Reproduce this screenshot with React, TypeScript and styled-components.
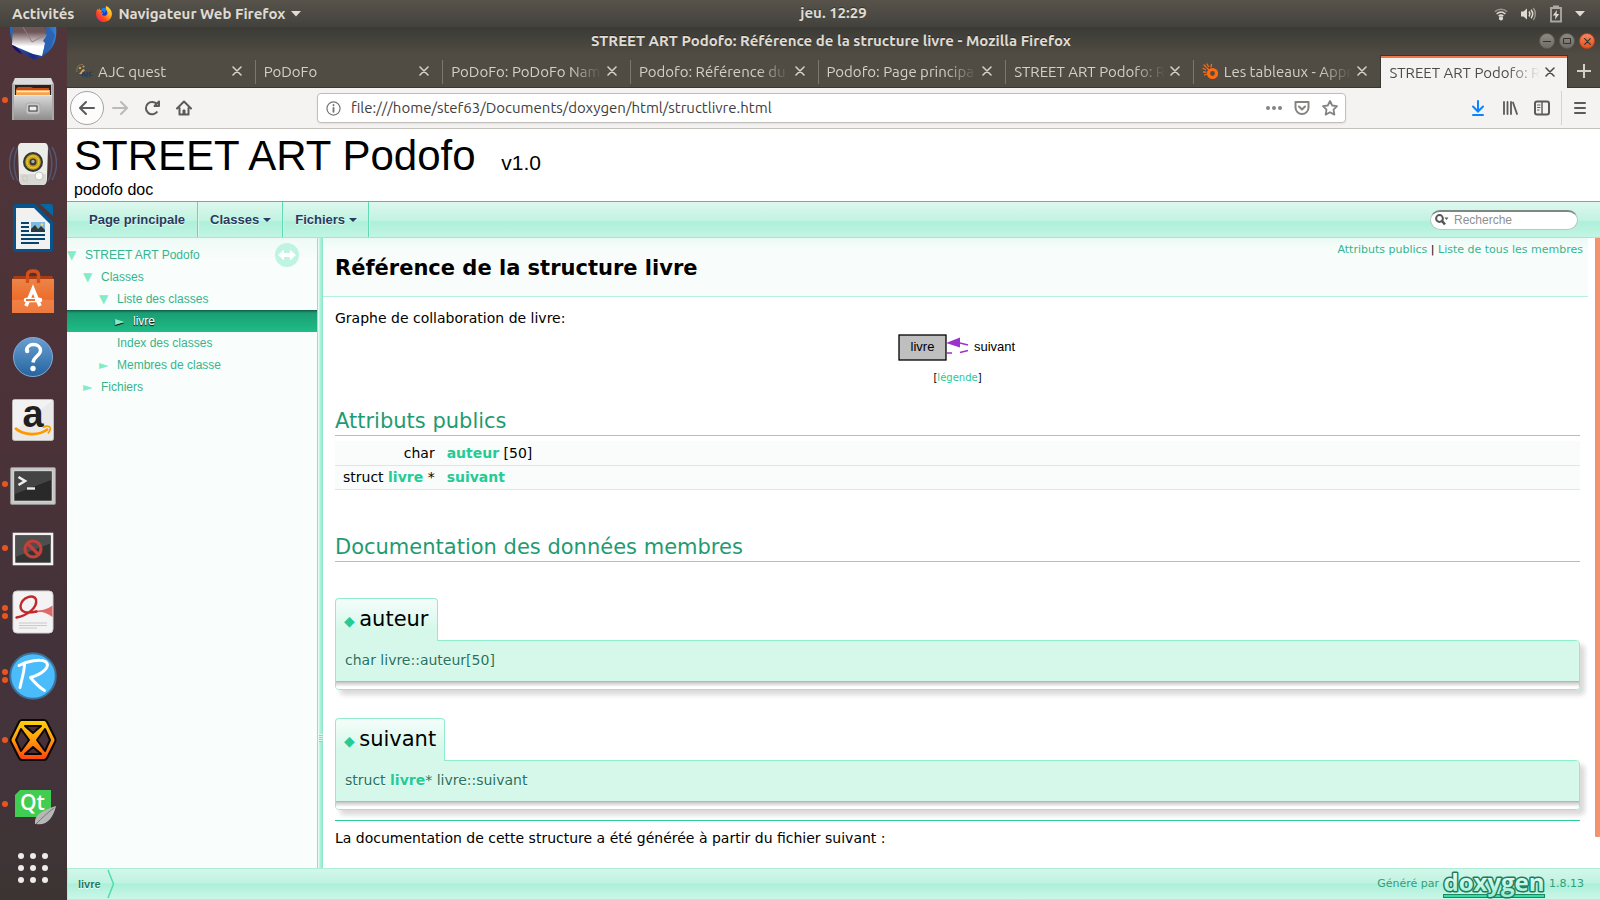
import React from "react";
import styled, { createGlobalStyle, css } from "styled-components";

const ui = `Ubuntu, "Noto Sans", "Open Sans", sans-serif`;
const sans = `"Liberation Sans", Arial, sans-serif`;
const doc = `"DejaVu Sans", Roboto, sans-serif`;

const Global = createGlobalStyle`
  *, *::before, *::after { box-sizing: border-box; }
  body { margin: 0; background: #fff; }
  button, input { font: inherit; color: inherit; }
  button { border: 0; padding: 0; background: none; cursor: pointer; }
  h1, h2, h3, p, ul { margin: 0; padding: 0; font-weight: normal; }
  ul { list-style: none; }
  a { text-decoration: none; color: inherit; }
  svg { display: block; flex: none; }
`;

const Desktop = styled.div`
  display: grid;
  grid-template: 27px minmax(0, 1fr) / 67px minmax(0, 1fr);
  height: 100vh;
  overflow: hidden;
`;

/* ---------- top panel ---------- */
const TopBar = styled.header`
  grid-column: 1 / -1;
  display: grid;
  grid-template-columns: 67px minmax(0, 1fr);
  background: linear-gradient(#57534b, #43423d);
  color: #dfdbd2;
  font: bold 15px/26px ${ui};
  text-shadow: 0 -1px 0 #33322e;
`;
const TopLeft = styled.div`
  grid-area: 1 / 1 / 2 / 3;
  display: flex;
  align-items: center;
  padding-left: 12px;
  gap: 22px;
`;
const AppMenu = styled.button`
  display: flex;
  align-items: center;
  gap: 6px;
`;
const Clock = styled.time`
  grid-area: 1 / 2 / 2 / 3;
  justify-self: center;
`;
const Tray = styled.div`
  grid-area: 1 / 2 / 2 / 3;
  justify-self: end;
  display: flex;
  align-items: center;
  gap: 12px;
  padding-right: 15px;
`;

/* ---------- dock ---------- */
const Dock = styled.nav`
  display: flex;
  flex-direction: column;
  justify-content: flex-end;
  overflow: hidden;
  background: linear-gradient(#50363a, #4b3238 45%, #44323a 70%, #42343a 88%, #3c3433);
`;
const DockItem = styled.button`
  flex: none;
  display: grid;
  grid-template-columns: 9px 48px;
  align-items: center;
  height: 64px;
`;
const Dots = styled.span`
  display: grid;
  gap: 2px;
  padding-left: 2px;
`;
const Dot = styled.i`
  width: 6px;
  height: 6px;
  border-radius: 50%;
  background: #e95420;
`;

/* ---------- browser window ---------- */
const Window = styled.div`
  display: flex;
  flex-direction: column;
  min-height: 0;
`;
const TitleBar = styled.div`
  flex: none;
  display: grid;
  grid-template-columns: 1fr auto 1fr;
  align-items: center;
  height: 28px;
  padding-right: 5px;
  background: linear-gradient(#3b3a36, #504c44);
  color: #dfdbd2;
  font: bold 15px/26px ${ui};
  text-shadow: 0 -1px 0 #2b2a27;
`;
const WindowTitle = styled.span`
  grid-column: 2;
`;
const WinButtons = styled.div`
  justify-self: end;
  display: flex;
  gap: 4px;
`;
const WinButton = styled.button<{ $close?: boolean }>`
  width: 16px;
  height: 16px;
  border-radius: 50%;
  border: 1px solid ${(p) => (p.$close ? "#c1441a" : "#5d5a53")};
  background: ${(p) => (p.$close ? "linear-gradient(#f48860, #e2541d)" : "linear-gradient(#8d8a82, #706d66)")};
  color: #33322e;
  display: grid;
  place-items: center;
`;
const TabBar = styled.div`
  flex: none;
  display: flex;
  height: 33px;
  background: #504c44;
  border-bottom: 1px solid #383632;
  font: 15px/32px ${ui};
`;
const Tab = styled.div<{ $active?: boolean }>`
  flex: 1 1 0;
  min-width: 0;
  display: flex;
  align-items: center;
  padding: 0 8px 0 9px;
  color: #d5d0c6;
  position: relative;
  &:not(:first-child)::before {
    content: "";
    position: absolute;
    left: 0;
    top: 5px;
    height: 24px;
    width: 1px;
    background: #7b776f;
  }
  ${(p) =>
    p.$active &&
    css`
      background: #f4f3f2;
      color: #4c4c4c;
      border: solid #383632;
      border-width: 1px 1px 0;
      margin-bottom: -1px;
      padding: 0 7px 0 8px;
      box-shadow: inset 0 2px #f0764a;
      &&::before { display: none; }
    `}
`;
const TabTitle = styled.button`
  flex: 1;
  min-width: 0;
  height: 30px;
  text-align: left;
  white-space: nowrap;
  overflow: hidden;
  mask-image: linear-gradient(to left, transparent, #000 32px);
`;
const TabIcon = styled.span`
  width: 22px;
`;
const TabClose = styled.button`
  display: grid;
  place-items: center;
  width: 20px;
  height: 20px;
`;
const NewTab = styled.button`
  width: 32px;
  display: grid;
  place-items: center;
  color: #d5d0c6;
`;
const ToolBar = styled.div`
  flex: none;
  display: flex;
  align-items: center;
  height: 41px;
  padding: 0 2px 0 3px;
  background: #f4f3f2;
  border-bottom: 1px solid #c4c1bd;
  color: #5b5a58;
`;
const ToolButton = styled.button<{ $dim?: boolean }>`
  flex: none;
  width: 32px;
  height: 34px;
  display: grid;
  place-items: center;
  color: ${(p) => (p.$dim ? "#bcbab8" : "inherit")};
`;
const BackButton = styled(ToolButton)`
  width: 34px;
  border: 1px solid #a5a3a0;
  border-radius: 50%;
  background: #fcfcfc;
`;
const UrlBox = styled.div`
  flex: 1;
  display: flex;
  align-items: center;
  height: 30px;
  margin: 0 116px 0 117px;
  padding: 0 1px 0 8px;
  border: 1px solid #c2bfbb;
  border-radius: 4px;
  background: #fff;
  color: #77757a;
  box-shadow: 0 1px 2px rgba(0, 0, 0, 0.08);
`;
const UrlInput = styled.input`
  flex: 1;
  min-width: 0;
  border: 0;
  outline: 0;
  padding: 0 0 0 10px;
  background: none;
  color: #3e3e3e;
  font: 15px/26px ${ui};
`;
const UrlButton = styled(ToolButton)`
  width: 28px;
  height: 26px;
  color: #858381;
`;
const Menu = styled(ToolButton)`
  width: 37px;
  margin-left: 3px;
  border-left: 1px solid #d6d4d1;
`;

/* ---------- documentation page ---------- */
const Masthead = styled.div`
  flex: none;
  height: 72px;
  padding: 3px 7px 0;
  background: #fff;
  color: #000;
  font-family: ${sans};
`;
const ProjectName = styled.h1`
  font-size: 42px;
  line-height: 48px;
`;
const Version = styled.small`
  margin-left: 14px;
  font-size: 21px;
  line-height: 21px;
`;
const Brief = styled.p`
  font-size: 16px;
  line-height: 20px;
`;
const NavBar = styled.nav`
  flex: none;
  display: flex;
  align-items: center;
  height: 37px;
  padding: 0 22px 0 9px;
  border-top: 1px solid #35cc9b;
  border-bottom: 1px solid #98eccf;
  background: linear-gradient(#ddf8ee, #c0f3e1 54%, #adf0d9 56%, #c3f4e4);
  font: bold 13px/36px ${sans};
  color: #283a5d;
  text-shadow: 0 1px 1px rgba(255, 255, 255, 0.9);
`;
const NavLink = styled.a`
  display: flex;
  align-items: center;
  gap: 4px;
  height: 35px;
  padding: 0 11px 0 12px;
  border-right: 1px solid #5fdbb2;
  box-shadow: 1px 0 #d8f8ec;
  &:first-child { padding: 0 12px 0 13px; }
`;
const Caret = styled.i`
  border: 4px solid transparent;
  border-top-color: #283a5d;
  border-bottom: 0;
`;
const SearchBox = styled.label`
  display: flex;
  align-items: center;
  gap: 5px;
  width: 148px;
  height: 20px;
  margin: 0 0 0 auto;
  padding: 0 10px 0 4px;
  border: 1px solid #b9c7c1;
  border-top: 2px solid #7f8784;
  border-radius: 10px;
  background: #fff;
`;
const SearchInput = styled.input`
  width: 100%;
  min-width: 0;
  border: 0;
  outline: 0;
  padding: 0;
  background: none;
  font: 12px/16px ${sans};
  &::placeholder { color: #909090; opacity: 1; }
`;
const Split = styled.div`
  flex: 1;
  min-height: 0;
  display: flex;
`;
const Side = styled.aside`
  flex: none;
  display: flex;
  align-items: flex-start;
  width: 251px;
  padding-top: 6px;
  border-right: 1px solid #86e8c7;
  background: linear-gradient(#eefaf6, #f9fdfc 22px);
  position: relative;
  font: 12px/22px ${sans};
  color: #35b58c;
`;
const Tree = styled.ul`
  flex: 1;
`;
const TreeRow = styled.li<{ $level: number; $selected?: boolean }>`
  display: flex;
  height: 22px;
  padding-left: ${(p) => p.$level * 16}px;
  ${(p) =>
    p.$selected &&
    css`
      color: #fff;
      background: linear-gradient(#0e5c43, #1a9e73 3px, #1fbd88);
      text-shadow: 0 1px 1px #000;
    `}
`;
const Arrow = styled.span`
  width: 18px;
  color: #82ebc8;
  font-family: ${doc};
`;
const Sync = styled.button`
  position: absolute;
  top: 5px;
  right: 18px;
`;
const Splitter = styled.div`
  flex: none;
  width: 5px;
  display: grid;
  grid-template-rows: 4fr 1fr;
  background: linear-gradient(to right, #f4fdfa, #b6f1de 40%, #86e8c6);
`;
const Grip = styled.i`
  place-self: end center;
  width: 4px;
  height: 8px;
  background: repeating-linear-gradient(#d9f8ed 0 1px, #79dfbc 1px 2px);
`;
const Main = styled.main`
  flex: 1;
  min-width: 0;
  overflow: hidden;
  background: #fff;
  color: #000;
  font: 14px/18px ${doc};
`;
const ScrollTrack = styled.div`
  flex: none;
  width: 12px;
  padding-left: 7px;
  background: #fff;
`;
const ScrollThumb = styled.div`
  height: 95%;
  background: #f4926c;
  border-radius: 0 0 1px 1px;
`;
const PageHead = styled.div`
  display: flex;
  justify-content: space-between;
  height: 59px;
  padding: 5px 5px 0 12px;
  border-bottom: 1px solid #b4f1dd;
  background: linear-gradient(#e9faf4, #f8fdfb 12px);
`;
const PageTitle = styled.h2`
  margin-top: 13px;
  font-size: 21px;
  line-height: 25px;
  font-weight: bold;
`;
const Summary = styled.div`
  font-size: 11px;
  line-height: 14px;
`;
const Link = styled.a`
  color: #35b58c;
`;
const LegendLink = styled.a`
  color: #25cb94;
`;
const Strong = styled(LegendLink)`
  font-weight: bold;
`;
const Contents = styled.div`
  padding: 12px 8px 0 12px;
`;
const Graph = styled.figure`
  display: flex;
  flex-direction: column;
  align-items: center;
  gap: 6px;
  margin: 4px 0 24px;
`;
const Legend = styled.figcaption`
  font-size: 10px;
  line-height: 14px;
`;
const SectionTitle = styled.h2`
  padding-bottom: 1px;
  border-bottom: 1px solid #6be3bc;
  color: #1f9b72;
  font-size: 21px;
  line-height: 25px;
`;
const Members = styled.table`
  width: 100%;
  margin: 5px 0 45px;
  border-collapse: collapse;
`;
const MemberCell = styled.td<{ $right?: boolean }>`
  height: 24px;
  padding: ${(p) => (p.$right ? "0 8px 0 4px" : "0 8px")};
  width: ${(p) => (p.$right ? "100%" : "auto")};
  text-align: ${(p) => (p.$right ? "left" : "right")};
  white-space: nowrap;
  background: #f9fcfb;
  border-bottom: 1px solid #dee4f0;
`;
const Member = styled.section`
  margin-bottom: 28px;
  &:first-of-type { margin-top: 36px; }
  &:last-of-type { margin-bottom: 10px; }
`;
const MemberTitle = styled.h3`
  position: relative;
  width: fit-content;
  height: 43px;
  margin-bottom: -1px;
  padding: 8px 8px 0;
  border: 1px solid #8fedcc;
  border-bottom: 0;
  border-radius: 4px 4px 0 0;
  background: linear-gradient(#f5fdfa, #d6f8eb 30px);
  font-size: 21px;
  line-height: 25px;
`;
const Permalink = styled.a`
  color: #25cb94;
  font-size: 14px;
  line-height: 14px;
`;
const MemberBox = styled.div`
  border: 1px solid #8fedcc;
  border-radius: 0 4px 4px 4px;
  box-shadow: 5px 5px 5px rgba(0, 0, 0, 0.15);
  overflow: hidden;
`;
const Proto = styled.div`
  height: 40px;
  padding: 10px 9px;
  background: #d6f8eb;
  color: #25735a;
  text-shadow: 0 1px 1px rgba(255, 255, 255, 0.9);
`;
const MemberDoc = styled.div`
  height: 8px;
  background: linear-gradient(#a6a6a6, #c6c6c6 1px, #fff 6px);
`;
const Rule = styled.hr`
  margin: 0 0 8px;
  border: 0;
  border-top: 1px solid #2acb97;
`;
const Footer = styled.footer`
  flex: none;
  display: flex;
  align-items: center;
  gap: 3px;
  height: 32px;
  padding: 0 16px 0 10px;
  border: 1px solid #aeeed8;
  border-right: 0;
  background: linear-gradient(#d3f7ea, #bff3e1 46%, #acf0d9 50%, #cbf6e8);
  color: #2f9f7b;
  font: 11px/30px ${doc};
`;
const Crumb = styled.a`
  display: flex;
  align-items: center;
  gap: 6px;
  margin-right: auto;
  color: #257a5e;
  font: bold 11px/30px ${sans};
  text-shadow: 0 1px 1px #fff;
`;

/* ---------- drawings ---------- */
const Cross = ({ s = 10 }: { s?: number }) => (
  <svg width={s} height={s} viewBox="0 0 10 10" stroke="currentColor" strokeWidth="1.6" strokeLinecap="round">
    <path d="M1 1l8 8M9 1l-8 8" />
  </svg>
);
const DownCaret = () => (
  <svg width="10" height="6" viewBox="0 0 10 6" fill="currentColor"><path d="M0 0h10L5 5.5z" /></svg>
);
const I = (p: { children: React.ReactNode; s?: number }) => (
  <svg width={p.s ?? 16} height={p.s ?? 16} viewBox="0 0 16 16" fill="none" stroke="currentColor" strokeWidth="2" strokeLinecap="round" strokeLinejoin="round">
    {p.children}
  </svg>
);
const FirefoxLogo = () => (
  <svg width="16" height="16" viewBox="0 0 16 16">
    <defs>
      <linearGradient id="ff" x1="1" y1="0" x2="0" y2="1">
        <stop offset="0" stopColor="#fff44f" /><stop offset=".35" stopColor="#ffb01f" /><stop offset=".65" stopColor="#ff4a1f" /><stop offset="1" stopColor="#e3127e" />
      </linearGradient>
    </defs>
    <circle cx="8" cy="8.2" r="6" fill="#1c3fc4" />
    <path d="M5 3.5C6 1.6 9 1.4 10.500 2.500L9 7z" fill="#0a84ff" />
    <path d="M1.200 3l1.300.8L3.600 2l.3 2c1 0 2 .4 2.600 1.200-1.400.3-1.700 1.200-1.700 1.200s2 0 2.700.3c-.2.900-1.700 1.300-1.700 1.300.4 1.700 2.700 2.400 4.200 1.400 1.700-1 1.700-3 .9-4.200C10 3.600 9.500 1.700 10 0c2.800 1 6 4 5.900 8.300C15.700 12.700 12.300 16 8 16 3.600 16 .1 12.600.1 8.200.1 6 .5 4.200 1.200 3z" fill="url(#ff)" />
  </svg>
);
const AjcLogo = () => (
  <svg width="17" height="16" viewBox="0 0 17 16">
    <path d="M1 9C0 4 3 1 7 1.500" fill="none" stroke="#8d744a" />
    <circle cx="4" cy="5" r="1.300" fill="#c89a55" /><circle cx="7.500" cy="3.500" r="1.100" fill="#a09e90" />
    <path d="M3 11l4-5 2 1-3 4z" fill="#c8a572" />
    <text x="5" y="12.500" fontFamily="DejaVu Sans" fontWeight="bold" fontSize="6" fill="#173f58">AJC</text>
    <path d="M6 14h9" stroke="#2e4a52" />
  </svg>
);
const FlameLogo = () => (
  <svg width="17" height="17" viewBox="0 0 17 17" fill="none" stroke="#ff6a13">
    <circle cx="10.500" cy="10.500" r="4" strokeWidth="3.200" />
    <path d="M2 2l2 2M5 1l1.500 2.500M9.500 1.500l-.5 2.500M1 5.500l2.500 1M1.500 9l2.500.2M2.500 12l2-.8M5 5l2 2" strokeWidth="1.300" strokeLinecap="round" />
  </svg>
);

const Thunderbird = () => (
  <svg width="48" height="48" viewBox="0 0 48 48">
    <defs>
      <linearGradient id="tb" x1="0" x2="1"><stop offset="0" stopColor="#2a6cb8" /><stop offset=".5" stopColor="#1b2a80" /><stop offset="1" stopColor="#2f86d6" /></linearGradient>
      <linearGradient id="tbe" x2="0" y2="1"><stop offset=".25" stopColor="#6d5558" /><stop offset=".7" stopColor="#fff" /></linearGradient>
    </defs>
    <path d="M1 14h46c1 9 0 19-8 26l-4 3-2 2-4 1-2 2-7-3-7-5C6 36 0 27 1 14z" fill="url(#tb)" />
    <path d="M4 12h28l7 8-6 24-9-2L3 33z" fill="url(#tbe)" />
    <path d="M14 15l9 15 17-9" fill="none" stroke="#8f7f84" />
    <path d="M3 33c4 1 8 5 10 9-5-2-9-5-10-9z" fill="#1c0d6a" />
    <path d="M40 16l-4 6 2 1-4 6 2 2-2 12 8-8 4-12z" fill="#2b62b4" />
  </svg>
);
const Files = () => (
  <svg width="48" height="48" viewBox="0 0 48 48">
    <defs><linearGradient id="fl" x2="0" y2="1"><stop offset="0" stopColor="#dadada" /><stop offset="1" stopColor="#8d8d8d" /></linearGradient></defs>
    <path d="M6 2h36l3 6v36H3V8z" fill="#a9a9a9" /><path d="M6 2h36l2 6H4z" fill="#dcdcdc" />
    <path d="M5 8h38v12H5z" fill="#b9b9b9" /><path d="M6 9h36v10H6z" fill="#262220" />
    <path d="M9 11h13l2 1h16v6H7v-5z" fill="#cc4a10" /><path d="M7 14h34v5H7z" fill="#f9a24c" /><path d="M8 15.500h32" stroke="#ffe7ca" strokeWidth="1.500" />
    <path d="M5 19h38v25H5z" fill="url(#fl)" /><path d="M5 19.500h38" stroke="#e8e8e8" />
    <rect x="17" y="27" width="14" height="11" rx="2.500" fill="#c9c9c9" stroke="#aaa" /><rect x="20" y="30" width="8" height="5" fill="#eee" stroke="#333" />
  </svg>
);
const Rhythmbox = () => (
  <svg width="48" height="48" viewBox="0 0 48 48" fill="none">
    <path d="M5 7C-1 17-1 30 5 40M9 7C4 17 4 31 9 41M43 7c6 10 6 23 0 33M39 7c5 10 5 24 0 34" stroke="#56709a" strokeWidth="1.500" opacity=".6" />
    <path d="M13 3h22c3 0 4 2 4 5l-1 30c0 4-1 7-4 7H14c-3 0-4-3-4-7L9 8c0-3 1-5 4-5z" fill="#ecece8" />
    <path d="M11 34h26v8c0 2-2 3-4 3H15c-2 0-4-1-4-3z" fill="#d9d9d4" />
    <circle cx="24" cy="22" r="10" fill="#34383a" /><circle cx="24" cy="22" r="7.800" fill="#c9a312" /><circle cx="24" cy="22" r="6" stroke="#e9cf4a" />
    <circle cx="24" cy="22" r="3.500" fill="#3a3a33" /><circle cx="24" cy="21.500" r="1.700" fill="#aaa" />
    <circle cx="30" cy="36" r="4" fill="#fafaf8" stroke="#c5c5c0" /><rect x="14" y="36" width="4" height="5" stroke="#cacac4" />
  </svg>
);
const Writer = () => (
  <svg width="48" height="48" viewBox="0 0 48 48">
    <path d="M4 3C4 1 5 0 7 0h19l18 18v27c0 2-1 3-3 3H7c-2 0-3-1-3-3z" fill="#05548c" />
    <path d="M31 0h10c2 0 3 1 3 3v9z" fill="#0369a3" />
    <path d="M7 4h18l16 16v25H7z" fill="#f1f1f1" />
    <path d="M12 19h8M12 23h8M12 27h8M12 31h24M12 35h24M12 39h18" stroke="#05456f" strokeWidth="1.800" />
    <rect x="22" y="18" width="14" height="10" fill="#7fb9dd" /><path d="M22 28v-3l4-4 3 4 3-3 4 4v2z" fill="#2d3a3c" /><circle cx="33" cy="20.500" r="1.300" fill="#ffdf5a" />
  </svg>
);
const Software = () => (
  <svg width="48" height="48" viewBox="0 0 48 48">
    <defs><linearGradient id="sw" x2="0" y2="1"><stop offset="0" stopColor="#ea8549" /><stop offset=".6" stopColor="#ee6c28" /><stop offset=".62" stopColor="#f08148" /><stop offset="1" stopColor="#ed7a3d" /></linearGradient></defs>
    <path d="M5 8h38l2 4H3z" fill="#a83c12" /><path d="M3 11h42v34H3z" fill="url(#sw)" />
    <path d="M18.500 15V7q0-4 5.500-4t5.500 4v8" fill="none" stroke="#d4501a" strokeWidth="3.400" />
    <path d="M17 38l7-17 7 17" fill="none" stroke="#fff" strokeWidth="3.600" /><path d="M17 32h14" stroke="#fff" strokeWidth="4.500" strokeLinecap="round" /><path d="M17 32h9" stroke="#e8641f" strokeWidth="1.800" />
  </svg>
);
const Help = () => (
  <svg width="48" height="48" viewBox="0 0 48 48">
    <defs><linearGradient id="hp" x2="0" y2="1"><stop offset="0" stopColor="#6a9fd2" /><stop offset="1" stopColor="#24649f" /></linearGradient></defs>
    <circle cx="24" cy="25" r="19.500" fill="url(#hp)" stroke="#83abd6" />
    <path d="M17.500 19c0-4 3-6.500 7-6.500s7 2.500 7 6c0 5-7 6-7.500 12" fill="none" stroke="#fff" strokeWidth="3.400" /><circle cx="24" cy="36.500" r="2.700" fill="#fff" /><circle cx="18.200" cy="19" r="2.200" fill="#fff" />
  </svg>
);
const Amazon = () => (
  <svg width="48" height="48" viewBox="0 0 48 48">
    <rect x="3.500" y="3.500" width="41" height="41" rx="2" fill="#e9e9e9" stroke="#bdbab8" /><path d="M4 4h40L4 36z" fill="#f2f2f2" />
    <text x="24" y="30.500" textAnchor="middle" fontFamily="Liberation Sans" fontWeight="bold" fontSize="38" fill="#1f1f1f">a</text>
    <path d="M6 32c9 8 24 8 33 1" fill="none" stroke="#f90" strokeWidth="2.800" /><path d="M34 31.500c3-1.500 6-1.500 7 0s-.5 4-2 6" fill="none" stroke="#f90" strokeWidth="1.800" />
  </svg>
);
const Terminal = () => (
  <svg width="48" height="48" viewBox="0 0 48 48">
    <rect x="1.500" y="7.500" width="45" height="37" rx="1.500" fill="#c6c6c6" stroke="#8f8f8f" /><rect x="5" y="11" width="38" height="30" fill="#292929" stroke="#f1f1f1" strokeWidth="0.500" />
    <path d="M6 12h36v8L6 34z" fill="#444" />
    <path d="M9.500 17l6.500 4-6.500 4" fill="none" stroke="#eee" strokeWidth="2.600" /><path d="M18 28.500h8" stroke="#eee" strokeWidth="2.400" />
  </svg>
);
const Screen = () => (
  <svg width="48" height="48" viewBox="0 0 48 48">
    <rect x="5" y="10" width="38" height="30" fill="#333" stroke="#f2f2f2" strokeWidth="2.600" /><path d="M6.500 11.500h35v8L6.500 33z" fill="#4e4e4e" />
    <g fill="none" stroke="#c2413b" strokeWidth="3.200"><circle cx="24" cy="25" r="8" /><path d="M18.500 19.500l11 11" /></g>
  </svg>
);
const Evince = () => (
  <svg width="48" height="48" viewBox="0 0 48 48">
    <rect x="4" y="3" width="40" height="42" rx="4" fill="#f3f3f3" stroke="#d0d0d0" />
    <path d="M26 22.500c7 0 12-1 17.500-5v11.500c-7-5-12-6-17.500-4z" fill="#e0686a" />
    <path d="M7.500 29.500C17 28 29 20 27 11.500 25 5.500 13 9 11.500 18c0 8 9 7 16 5.500" fill="none" stroke="#c3282c" strokeWidth="2.400" strokeLinecap="round" />
    <path d="M10 35h28M10 37.500h28M10 40h18" stroke="#c9c9c9" />
  </svg>
);
const Remmina = () => (
  <svg width="48" height="48" viewBox="0 0 48 48">
    <circle cx="24" cy="24" r="22.800" fill="#4bbcfb" stroke="#3c7199" strokeWidth="2" />
    <path d="M15.500 13C15 21 12 30 11 35.500M10 13.500C18 9 32 6.500 37 10c5 5-4 12-15.500 15.500 4 5 9 10 14 13" fill="none" stroke="#fff" strokeWidth="3" strokeLinecap="round" strokeLinejoin="round" />
  </svg>
);
const HexX = () => (
  <svg width="48" height="48" viewBox="0 0 48 48">
    <defs><linearGradient id="hx" x2="0" y2="1"><stop offset="0" stopColor="#fdd309" /><stop offset=".5" stopColor="#ff9a0e" /><stop offset="1" stopColor="#ff4010" /></linearGradient></defs>
    <path d="M13 4h22q2 0 3 2l8 16q1 2 0 4l-8 16q-1 2-3 2H13q-2 0-3-2L2 26q-1-2 0-4l8-16q1-2 3-2z" fill="url(#hx)" stroke="#0c0705" strokeWidth="2" />
    <path d="M16 10h16l-8 7zM16 38h16l-8-7zM12 13l8 11-8 11-5-11zM36 13l-8 11 8 11 5-11z" fill="#46303a" stroke="#0c0705" strokeWidth="2" strokeLinejoin="round" />
  </svg>
);
const QtIcon = () => (
  <svg width="48" height="48" viewBox="0 0 48 48">
    <path d="M11 10h31v27H6V15z" fill="#41cd52" />
    <text x="23.500" y="30" textAnchor="middle" fontFamily="Open Sans, Noto Sans" fontWeight="600" fontSize="21" fill="#fff">Qt</text>
    <path d="M26 44c-1-9 6-13 21-18-3 12-9 20-20 18z" fill="#b7b7b7" /><path d="M27 44C33 38 38 33 45 28" stroke="#777" fill="none" />
  </svg>
);
const Grid = () => (
  <svg width="48" height="48" viewBox="0 0 48 48" fill="#eeeceb">
    {[12, 24, 36].map((y) => [12, 24, 36].map((x) => <circle key={`${x}-${y}`} cx={x} cy={y} r="3" />))}
  </svg>
);
const DoxygenLogo = () => (
  <svg width="104" height="31" viewBox="0 0 104 31" role="img" aria-label="doxygen">
    <defs><linearGradient id="dx" x2="0" y2="1"><stop offset=".2" stopColor="#f4fffb" /><stop offset="1" stopColor="#90eccd" /></linearGradient></defs>
    <rect x="1.500" y="25.500" width="101" height="3" fill="#36dba5" stroke="#1b8763" />
    <text x="52" y="22" textAnchor="middle" fontFamily="Open Sans, Noto Sans" fontWeight="bold" fontSize="24" fill="url(#dx)" stroke="#1b7d5c" strokeWidth="3" strokeLinejoin="round" paintOrder="stroke">doxygen</text>
  </svg>
);

const dock: { name: string; dots: number; icon: React.ReactNode }[] = [
  { name: "Thunderbird", dots: 0, icon: <Thunderbird /> },
  { name: "Fichiers", dots: 1, icon: <Files /> },
  { name: "Rhythmbox", dots: 0, icon: <Rhythmbox /> },
  { name: "LibreOffice Writer", dots: 0, icon: <Writer /> },
  { name: "Logiciels", dots: 0, icon: <Software /> },
  { name: "Aide", dots: 0, icon: <Help /> },
  { name: "Amazon", dots: 0, icon: <Amazon /> },
  { name: "Terminal", dots: 1, icon: <Terminal /> },
  { name: "Capture", dots: 1, icon: <Screen /> },
  { name: "Visionneur", dots: 2, icon: <Evince /> },
  { name: "R", dots: 2, icon: <Remmina /> },
  { name: "Mind", dots: 1, icon: <HexX /> },
  { name: "Qt Creator", dots: 1, icon: <QtIcon /> },
  { name: "Applications", dots: 0, icon: <Grid /> },
];
const tabs: { title: string; icon?: React.ReactNode; active?: boolean }[] = [
  { title: "AJC quest", icon: <AjcLogo /> },
  { title: "PoDoFo" },
  { title: "PoDoFo: PoDoFo Nam" },
  { title: "Podofo: Référence du" },
  { title: "Podofo: Page principa" },
  { title: "STREET ART Podofo: R" },
  { title: "Les tableaux - Appr", icon: <FlameLogo /> },
  { title: "STREET ART Podofo: R", active: true },
];
const tree = [
  { label: "STREET ART Podofo", level: 0, arrow: "▼" },
  { label: "Classes", level: 1, arrow: "▼" },
  { label: "Liste des classes", level: 2, arrow: "▼" },
  { label: "livre", level: 3, arrow: "►", selected: true },
  { label: "Index des classes", level: 2, arrow: "" },
  { label: "Membres de classe", level: 2, arrow: "►" },
  { label: "Fichiers", level: 1, arrow: "►" },
];

export default function App() {
  return (
    <Desktop>
      <Global />
      <TopBar>
        <TopLeft>
          <button>Activités</button>
          <AppMenu><FirefoxLogo />Navigateur Web Firefox<DownCaret /></AppMenu>
        </TopLeft>
        <Clock>jeu. 12:29</Clock>
        <Tray>
          <svg width="14" height="14" viewBox="0 0 16 16" fill="none" stroke="currentColor" strokeWidth="1.800">
            <path d="M1 5.500C5 1.500 11 1.500 15 5.500" opacity=".5" /><path d="M3 8c3-2.700 7-2.700 10 0M5.300 10.400c1.600-1.300 3.800-1.300 5.400 0" /><circle cx="8" cy="13" r="1.500" fill="currentColor" />
          </svg>
          <svg width="17" height="16" viewBox="0 0 17 16" fill="none" stroke="currentColor" strokeWidth="1.500">
            <path d="M1 5.500h2.500L7 2.500v11l-3.500-3H1z" fill="currentColor" stroke="none" /><path d="M9 5.500c1 1.500 1 3.500 0 5M11 3.800c2 2.500 2 6 0 8.400" /><path d="M13.300 2c2.700 3.500 2.700 8.500 0 12" opacity=".5" />
          </svg>
          <svg width="14" height="18" viewBox="0 0 14 18">
            <path d="M4 1.500h6M2 3h10v13.500H2z" fill="none" stroke="currentColor" strokeWidth="1.800" opacity=".65" /><path d="M8 5L3.800 10.500H6.500L6 14.500 10.200 9H7.500z" fill="currentColor" />
          </svg>
          <DownCaret />
        </Tray>
      </TopBar>

      <Dock aria-label="Dock">
        {dock.map((d) => (
          <DockItem key={d.name} aria-label={d.name}>
            <Dots>{Array.from({ length: d.dots }, (_, i) => <Dot key={i} />)}</Dots>
            {d.icon}
          </DockItem>
        ))}
      </Dock>

      <Window>
        <TitleBar>
          <WindowTitle>STREET ART Podofo: Référence de la structure livre - Mozilla Firefox</WindowTitle>
          <WinButtons>
            <WinButton aria-label="Réduire"><svg width="8" height="8" stroke="currentColor"><path d="M0 4.500h8" /></svg></WinButton>
            <WinButton aria-label="Agrandir"><svg width="8" height="8" fill="none" stroke="currentColor"><path d="M.5 1.500h7v5h-7z" /></svg></WinButton>
            <WinButton $close aria-label="Fermer"><Cross s={7} /></WinButton>
          </WinButtons>
        </TitleBar>
        <TabBar>
          {tabs.map((t, i) => (
            <Tab key={i} $active={t.active}>
              {t.icon && <TabIcon>{t.icon}</TabIcon>}
              <TabTitle>{t.title}</TabTitle>
              <TabClose aria-label="Fermer l’onglet"><Cross /></TabClose>
            </Tab>
          ))}
          <NewTab aria-label="Nouvel onglet"><svg width="14" height="14" stroke="currentColor" strokeWidth="2"><path d="M7 0v14M0 7h14" /></svg></NewTab>
        </TabBar>
        <ToolBar>
          <BackButton aria-label="Précédent"><I><path d="M15 8H1.500M7 2L1 8l6 6" /></I></BackButton>
          <ToolButton $dim aria-label="Suivant"><I><path d="M1 8h13.500M9 2l6 6-6 6" /></I></ToolButton>
          <ToolButton aria-label="Actualiser"><I><path d="M13.300 11.500A6.200 6.200 0 1 1 13 4.300M15 1.500V6h-4.500z" strokeLinecap="butt" /></I></ToolButton>
          <ToolButton aria-label="Accueil"><I><path d="M1 8.500l7-7 7 7M3.500 8v6.500h9V8" /><path d="M7 14v-4h2v4z" fill="currentColor" strokeWidth="1" /></I></ToolButton>
          <UrlBox>
            <I s={15}><circle cx="8" cy="8" r="7" strokeWidth="1.300" /><path d="M8 7.500v4" /><path d="M8 4.300v.2" /></I>
            <UrlInput aria-label="Adresse" defaultValue="file:///home/stef63/Documents/doxygen/html/structlivre.html" />
            <UrlButton aria-label="Actions"><I><g fill="currentColor" stroke="none"><circle cx="2" cy="8" r="2" /><circle cx="8" cy="8" r="2" /><circle cx="14" cy="8" r="2" /></g></I></UrlButton>
            <UrlButton aria-label="Pocket"><I><path d="M1.500 2h13v5.500a6.500 6.500 0 0 1-13 0zM5 6.500l3 3 3-3" /></I></UrlButton>
            <UrlButton aria-label="Marque-page"><I><path d="M8 1l2.200 4.500 4.800.6-3.500 3.500.9 5L8 12.200l-4.400 2.400.9-5L1 6.100l4.800-.6z" strokeWidth="1.800" /></I></UrlButton>
          </UrlBox>
          <ToolButton aria-label="Téléchargements"><svg width="16" height="16" viewBox="0 0 16 16" fill="none" stroke="#0a84ff" strokeWidth="2" strokeLinecap="round"><path d="M8 1v10M3 6.500L8 11.500l5-5M3 15h10" /></svg></ToolButton>
          <ToolButton aria-label="Bibliothèque"><I><path d="M2 2v12M5.500 2v12M9 2v12M11 2.500L15 14" strokeWidth="1.800" /></I></ToolButton>
          <ToolButton aria-label="Panneaux latéraux"><I><rect x="1" y="1.500" width="14" height="13" rx="2" /><path d="M8 2v12" strokeWidth="1.400" /><path d="M3.500 5H6M3.500 7.500H6M3.500 10H5" strokeWidth="1" /></I></ToolButton>
          <Menu aria-label="Menu"><I><path d="M3 3h10M3 8h10M3 13h10" /></I></Menu>
        </ToolBar>

        <Masthead>
          <ProjectName>STREET ART Podofo <Version>v1.0</Version></ProjectName>
          <Brief>podofo doc</Brief>
        </Masthead>
        <NavBar>
          <NavLink href="#main">Page principale</NavLink>
          <NavLink href="#classes">Classes<Caret /></NavLink>
          <NavLink href="#files">Fichiers<Caret /></NavLink>
          <SearchBox>
            <svg width="14" height="14" viewBox="0 0 14 14" fill="none" stroke="#555" strokeWidth="2"><circle cx="4.500" cy="5.500" r="3.400" /><path d="M7 8l3 3.500" strokeWidth="2.600" /><path d="M9.500 4.500h4L11.500 7z" fill="#555" stroke="none" /></svg>
            <SearchInput aria-label="Recherche" placeholder="Recherche" />
          </SearchBox>
        </NavBar>
        <Split>
          <Side>
            <Tree>
              {tree.map((n) => (
                <TreeRow key={n.label} $level={n.level} $selected={n.selected}>
                  <Arrow>{n.arrow}</Arrow><a href="#node">{n.label}</a>
                </TreeRow>
              ))}
            </Tree>
            <Sync aria-label="Synchroniser">
              <svg width="24" height="24" viewBox="0 0 24 24"><circle cx="12" cy="12" r="12" fill="#bff4e2" /><path d="M3 12l6-5.500v3.500h6V6.500l6 5.500-6 5.500V14H9v3.500z" fill="#fff" /></svg>
            </Sync>
          </Side>
          <Splitter><Grip /></Splitter>
          <Main>
            <PageHead>
              <PageTitle>Référence de la structure livre</PageTitle>
              <Summary><Link href="#pub">Attributs publics</Link> | <Link href="#all">Liste de tous les membres</Link></Summary>
            </PageHead>
            <Contents>
              <p>Graphe de collaboration de livre:</p>
              <Graph>
                <svg width="120" height="34" viewBox="0 0 120 34" fontFamily="Liberation Sans" fontSize="13">
                  <rect x="1" y="4" width="47" height="25" fill="#bfbfbf" stroke="#000" strokeWidth="1.300" />
                  <text x="24.500" y="20" textAnchor="middle">livre</text>
                  <path d="M48 12l14-5.500v10z" fill="#9a32cd" /><path d="M62 12l8 2M49 22h5M62 21.500l8-2" fill="none" stroke="#9a32cd" strokeWidth="1.300" />
                  <text x="76" y="20">suivant</text>
                </svg>
                <Legend>[<LegendLink href="#legend">légende</LegendLink>]</Legend>
              </Graph>
              <SectionTitle>Attributs publics</SectionTitle>
              <Members>
                <tbody>
                  <tr><MemberCell>char</MemberCell><MemberCell $right><Strong href="#auteur">auteur</Strong> [50]</MemberCell></tr>
                  <tr><MemberCell>struct <Strong href="#livre">livre</Strong> *</MemberCell><MemberCell $right><Strong href="#suivant">suivant</Strong></MemberCell></tr>
                </tbody>
              </Members>
              <SectionTitle>Documentation des données membres</SectionTitle>
              <Member>
                <MemberTitle><Permalink href="#auteur">◆&nbsp;</Permalink>auteur</MemberTitle>
                <MemberBox><Proto>char livre::auteur[50]</Proto><MemberDoc /></MemberBox>
              </Member>
              <Member>
                <MemberTitle><Permalink href="#suivant">◆&nbsp;</Permalink>suivant</MemberTitle>
                <MemberBox><Proto>struct <Strong href="#livre">livre</Strong>* livre::suivant</Proto><MemberDoc /></MemberBox>
              </Member>
              <Rule />
              <p>La documentation de cette structure a été générée à partir du fichier suivant :</p>
            </Contents>
          </Main>
          <ScrollTrack><ScrollThumb /></ScrollTrack>
        </Split>
        <Footer>
          <Crumb href="#livre">livre<svg width="8" height="30" viewBox="0 0 8 30" fill="none" stroke="#4fdcb0" strokeWidth="1.500"><path d="M1 1l5.500 14L1 29" /></svg></Crumb>
          Généré par <DoxygenLogo /> 1.8.13
        </Footer>
      </Window>
    </Desktop>
  );
}
